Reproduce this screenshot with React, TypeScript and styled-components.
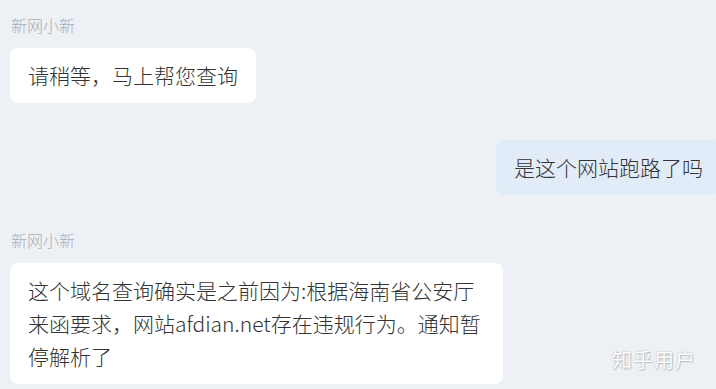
import * as React from "react";
import styled, { createGlobalStyle } from "styled-components";

const GlobalStyle = createGlobalStyle`
  html, body {
    margin: 0;
    padding: 0;
    background: #edf0f4;
  }
  body {
    font-family: "Noto Sans CJK SC", "Noto Sans", sans-serif;
    overflow: hidden;
  }
`;

const Page = styled.div`
  position: relative;
  width: 716px;
  height: 389px;
  overflow: hidden;
  background: #edf0f4;
  display: flex;
  flex-direction: column;
  padding: 13px 0 0 10px;
  box-sizing: border-box;
`;

const Group = styled.div<{ $mine?: boolean; $top?: number }>`
  display: flex;
  flex-direction: column;
  align-items: ${(p) => (p.$mine ? "flex-end" : "flex-start")};
  margin-top: ${(p) => p.$top ?? 0}px;
  margin-right: ${(p) => (p.$mine ? "-5px" : "0")};
`;

const Name = styled.div`
  font-size: 16px;
  line-height: 24px;
  font-weight: 300;
  color: #aaaeb5;
  padding-left: 1px;
  margin-bottom: 11px;
`;

const Bubble = styled.div<{ $mine?: boolean }>`
  max-width: 493px;
  box-sizing: border-box;
  padding: 11px 18px;
  border-radius: 8px;
  background: ${(p) => (p.$mine ? "#e2ecf8" : "#ffffff")};
  color: #333333;
  font-size: 21px;
  font-weight: 300;
  line-height: 33px;
  word-break: break-all;
`;

const Watermark = styled.div`
  position: absolute;
  right: 20px;
  bottom: 15px;
  font-size: 20px;
  letter-spacing: 1px;
  color: #ffffff;
  text-shadow: 0 0 2px rgba(0, 0, 0, 0.28), 1px 1px 1px rgba(0, 0, 0, 0.15);
`;

export default () => {
  return (
    <Page>
      <GlobalStyle />
      <Group>
        <Name>新网小新</Name>
        <Bubble>请稍等，马上帮您查询</Bubble>
      </Group>
      <Group $mine $top={37}>
        <Bubble $mine>是这个网站跑路了吗</Bubble>
      </Group>
      <Group $top={33}>
        <Name>新网小新</Name>
        <Bubble>
          这个域名查询确实是之前因为:根据海南省公安厅来函要求，网站afdian.net存在违规行为。通知暂停解析了
        </Bubble>
      </Group>
      <Watermark>知乎用户</Watermark>
    </Page>
  );
};
